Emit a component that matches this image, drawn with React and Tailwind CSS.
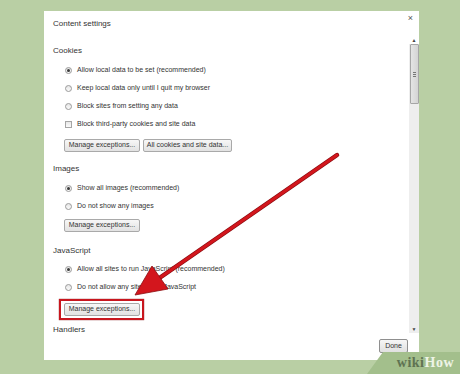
import React from 'react';

const font = { fontFamily: '"Liberation Sans", Arial, sans-serif' };

// Radio button, checked or not
const Radio = ({ checked }) => (
  <span className="relative flex h-[7px] w-[7px] shrink-0 items-center justify-center rounded-full border border-[#9a9a9a] bg-gradient-to-b from-[#e6e6e6] to-[#fafafa]">
    {checked && <span className="h-[3px] w-[3px] rounded-full bg-[#3a3a3a]" />}
  </span>
);

const Checkbox = () => (
  <span className="h-[7px] w-[7px] shrink-0 border border-[#a5a5a5] bg-gradient-to-b from-[#e8e8e8] to-[#fafafa]" />
);

const Option = ({ label, checked, box }) => (
  <div className="flex h-[18px] items-center gap-[5px] whitespace-nowrap pl-[12px] text-[7px] text-[#333]">
    {box ? <Checkbox /> : <Radio checked={checked} />}
    <span>{label}</span>
  </div>
);

const Button = ({ children, className = '' }) => (
  <div
    className={`flex h-[13px] items-center justify-center whitespace-nowrap rounded-[2px] border border-[#a9a9a9] bg-gradient-to-b from-[#f7f7f7] to-[#e2e2e2] text-[7px] text-[#333] ${className}`}
  >
    {children}
  </div>
);

const Heading = ({ children, className = '' }) => (
  <div className={`flex h-[12px] items-center whitespace-nowrap text-[8px] text-[#333] ${className}`}>{children}</div>
);

export default function App() {
  return (
    <div className="relative h-[374px] w-[460px] overflow-hidden bg-[#b9cfa4] pl-[44px] pt-[11px]" style={font}>
      {/* dialog */}
      <div className="flex h-[349px] w-[375px] flex-col bg-white">
        <div className="relative flex h-[25px] items-center pl-[9px] pt-[1px] text-[8px] text-[#333]">
          Content settings
          <span className="absolute right-[6px] top-[3px] text-[9px] leading-none text-[#555]">×</span>
        </div>

        <div className="flex h-[297px]">
          <div className="flex-1 overflow-hidden pl-[9px] pt-[9px]">
            <Heading>Cookies</Heading>
            <div className="mt-[4px]">
              <Option label="Allow local data to be set (recommended)" checked />
              <Option label="Keep local data only until I quit my browser" />
              <Option label="Block sites from setting any data" />
              <div className="h-[17px]">
                <Option label="Block third-party cookies and site data" box />
              </div>
            </div>
            <div className="mt-[7px] flex gap-[3px] pl-[11px]">
              <Button className="w-[76px]">Manage exceptions...</Button>
              <Button className="w-[89px]">All cookies and site data...</Button>
            </div>

            <Heading className="mt-[11px]">Images</Heading>
            <div className="mt-[4px]">
              <Option label="Show all images (recommended)" checked />
              <Option label="Do not show any images" />
            </div>
            <div className="mt-[4px] flex pl-[11px]">
              <Button className="w-[76px]">Manage exceptions...</Button>
            </div>

            <Heading className="mt-[13px]">JavaScript</Heading>
            <div className="mt-[3px]">
              <Option label="Allow all sites to run JavaScript (recommended)" checked />
              <Option label="Do not allow any site to run JavaScript" />
            </div>
            <div className="mt-[7px] flex pl-[11px]">
              <div className="relative">
                <Button className="w-[76px]">Manage exceptions...</Button>
                <span className="absolute -bottom-[4px] -left-[5px] -right-[4px] -top-[4px] border-[2.5px] border-[#c8161e] shadow-[0_0_1px_#7a0a0e]" />
              </div>
            </div>

            <Heading className="mt-[8px]">Handlers</Heading>
          </div>

          {/* scrollbar */}
          <div className="flex w-[10px] flex-col items-center bg-[#eeeeee]">
            <div className="flex h-[8px] w-full items-center justify-center bg-white text-[5px] leading-none text-[#444]">▲</div>
            <div className="flex h-[60px] w-[9px] items-center justify-center rounded-[1px] border border-[#a6a6a6] bg-gradient-to-r from-[#e4e4e4] to-[#d4d4d4]">
              <span className="flex flex-col gap-[1px]">
                <span className="h-px w-[3px] bg-[#777]" />
                <span className="h-px w-[3px] bg-[#777]" />
                <span className="h-px w-[3px] bg-[#777]" />
              </span>
            </div>
            <div className="flex-1" />
            <div className="flex h-[8px] w-full items-center justify-center text-[5px] leading-none text-[#444]">▼</div>
          </div>
        </div>

        <div className="flex flex-1 items-start justify-end pr-[11px] pt-[6px]">
          <div className="flex h-[14px] w-[29px] items-center justify-center rounded-[2px] border border-[#8f8f8f] bg-gradient-to-b from-[#f6f6f6] to-[#e0e0e0] text-[7px] text-[#333]">
            Done
          </div>
        </div>
      </div>

      {/* annotation arrow */}
      <svg className="absolute left-0 top-0" width="460" height="374" viewBox="0 0 460 374">
        <line x1="337" y1="155" x2="158" y2="279" stroke="#8a0c10" strokeWidth="4.5" strokeLinecap="round" />
        <line x1="337" y1="155" x2="158" y2="279" stroke="#d3161d" strokeWidth="3" strokeLinecap="round" />
        <polygon points="135,295 152,266 168,289" fill="#d3161d" stroke="#8a0c10" strokeWidth="0.8" />
      </svg>

      {/* watermark */}
      <div className="absolute bottom-0 right-0 flex h-[22px] w-[93px] items-center justify-end bg-[#a3bf8c] pr-[6px] [clip-path:polygon(16px_0,100%_0,100%_100%,0_100%)]">
        <span className="text-[14px] font-bold leading-none tracking-[0.5px]" style={{ fontFamily: '"Liberation Serif", serif' }}>
          <span className="text-[#5f7352]">wiki</span>
          <span className="text-[#eef4e6]">How</span>
        </span>
      </div>
    </div>
  );
}
